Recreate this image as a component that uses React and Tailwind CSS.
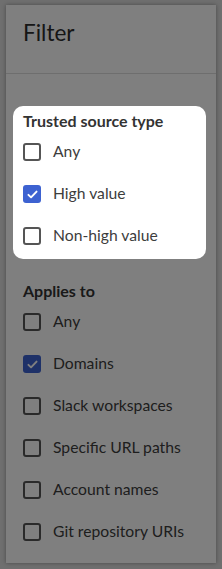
import React from 'react'

const Check = ({ checked }) =>
  checked ? (
    <span className="flex h-[18px] w-[18px] items-center justify-center rounded-[3px] bg-[#3d62d1]">
      <svg viewBox="0 0 16 16" className="h-[13px] w-[13px]" fill="none" stroke="white" strokeWidth="2.4" strokeLinecap="round" strokeLinejoin="round">
        <path d="M3 8.5l3.2 3L13 4.5" />
      </svg>
    </span>
  ) : (
    <span className="h-[18px] w-[18px] rounded-[3px] border-2 border-[#555]" />
  )

const Option = ({ label, checked }) => (
  <label className="flex h-[42px] items-center gap-3 text-[15.7px] text-[#3d3d3d]">
    <Check checked={checked} />
    <span>{label}</span>
  </label>
)

const trusted = [
  { label: 'Any' },
  { label: 'High value', checked: true },
  { label: 'Non-high value' },
]

const applies = [
  { label: 'Any' },
  { label: 'Domains', checked: true },
  { label: 'Slack workspaces' },
  { label: 'Specific URL paths' },
  { label: 'Account names' },
  { label: 'Git repository URIs' },
]

export default function App() {
  return (
    <div
      className="relative h-[569px] w-[222px] overflow-hidden bg-[#dedede] pt-[5px]"
      style={{ fontFamily: 'Lato, "Open Sans", sans-serif' }}
    >
      <div className="ml-[6px] h-[558px] w-[210px] bg-white shadow-[0_0_4px_rgba(0,0,0,0.35)]">
        <div className="h-[69px] border-b border-[#ddd] px-[17px] pt-[14px]">
          <h2 className="text-[22.5px] leading-7 text-[#2c2c2c]">Filter</h2>
        </div>

        <div className="relative z-20 mx-[7px] mt-[32px] w-[193px] rounded-[10px] bg-white px-[10px] pb-[2px] pt-[5px]">
          <h3 className="text-[16px] font-bold leading-5 text-[#333]">Trusted source type</h3>
          {trusted.map((o) => (
            <Option key={o.label} {...o} />
          ))}
        </div>

        <div className="mt-[22px] px-[17px]">
          <h3 className="text-[16px] font-bold leading-5 text-[#333]">Applies to</h3>
          {applies.map((o) => (
            <Option key={o.label} {...o} />
          ))}
        </div>
      </div>

      <div className="absolute inset-0 z-10 bg-black/50" />
    </div>
  )
}
